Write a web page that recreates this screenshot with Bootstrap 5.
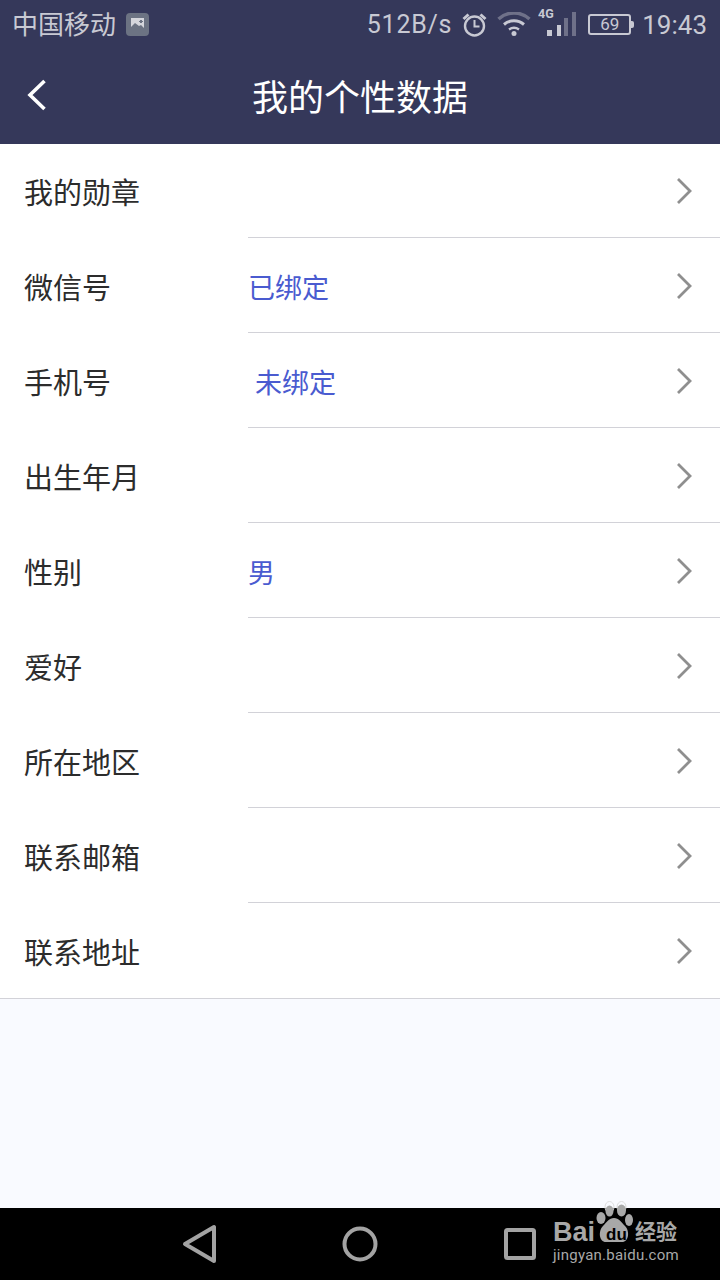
<!DOCTYPE html>
<html lang="zh-CN">
<head>
  <meta charset="UTF-8" />
  <meta name="viewport" content="width=device-width, initial-scale=1.0" />
  <title>我的个性数据</title>
  <link href="https://cdn.jsdelivr.net/npm/bootstrap@5.3.0/dist/css/bootstrap.min.css" rel="stylesheet" />
  <style>
    html, body { height: 100%; margin: 0; }
    body { width: 720px; height: 1280px; overflow: hidden; background: #f9faff; font-family: "Roboto", "Noto Sans CJK SC", sans-serif; }
    .phone { height: 1280px; }
    .status-bar { height: 48px; background: #35385a; color: #c8c9d3; font-size: 26px; padding: 0 13px 0 12px; }
    .carrier { padding-top: 2px; }
    .status-bar .net { font-size: 25px; letter-spacing: .75px; padding-top: 2px; }
    .status-bar .clock { font-size: 26px; margin-left: 11px; padding-top: 2px; }
    .notif { margin-left: 10px; }
    .alarm { margin-left: 10px; }
    .wifi { margin-left: 10px; }
    .signal { margin-left: 7px; margin-right: 12px; }
    .batt { position: relative; width: 43px; height: 21px; border: 2px solid #c8c9d3; border-radius: 3px; font-size: 17px; line-height: 17px; text-align: center; }
    .batt::after { content: ""; position: absolute; right: -5px; top: 5px; width: 3px; height: 7px; background: #c8c9d3; border-radius: 0 2px 2px 0; }
    .app-head { height: 96px; background: #35385a; color: #fff; font-size: 36px; position: relative; }
    .app-title { padding-top: 6px; }
    .back-btn { position: absolute; left: 26px; top: 30px; line-height: 0; }
    .info-list { background: #fff; border-bottom: 1px solid #d2d2d8; border-radius: 0; }
    .info-row { height: 95px; padding: 0; border: 0; background: #fff; color: #2c2c2c; }
    .info-row:last-child { height: 94px; }
    .info-name { width: 248px; padding-left: 24px; padding-top: 3px; font-size: 29px; line-height: 94px; }
    .info-main { border-bottom: 1px solid #d2d2d8; height: 94px; padding-right: 27px; }
    .info-row:last-child .info-main { border-bottom: 0; }
    .info-val { color: #4a5bd0; font-size: 27px; padding-top: 8px; }
    .val-shift { padding-left: 7px; }
    .fill-area { background: #f9faff; }
    .nav-keys { height: 72px; background: #000; position: relative; }
    .key-back { position: absolute; left: 182px; top: 16px; }
    .key-home { position: absolute; left: 342px; top: 18px; }
    .key-recent { position: absolute; left: 503px; top: 19px; }
    .wm { position: absolute; left: 553px; top: 6px; color: #a8a8a8; width: 150px; height: 60px; }
    .wm-bai { position: absolute; left: 0; top: -2px; font: 700 27px/40px "Liberation Sans", sans-serif; }
    .wm-paw { position: absolute; left: 42px; top: -13px; }
    .wm-du { position: absolute; left: 53px; top: 13px; color: #000; font: 700 17px/16px "Liberation Sans", sans-serif; }
    .wm-jy { position: absolute; left: 82px; top: 4px; font-size: 21px; line-height: 28px; font-weight: 700; white-space: nowrap; }
    .wm-url { position: absolute; left: 0; top: 31px; font: 400 15px/20px "Roboto", sans-serif; letter-spacing: .24px; white-space: nowrap; }
  </style>
</head>
<body>
  <div class="phone d-flex flex-column">
    <div class="status-bar d-flex align-items-center">
      <span class="carrier">中国移动</span>
      <svg class="notif" width="23" height="23" viewBox="0 0 23 23"><rect width="23" height="23" rx="4" fill="#6c7383"/><rect x="5" y="5" width="13" height="13" fill="#d5d6dc"/><path d="M5 14l4-4 4 3 2-1 3 3v3H5z" fill="#6c7383"/><path d="M14 7h2v1h1v1h-1v1h-2V9h-1V8h1z" fill="#6c7383"/></svg>
      <span class="net ms-auto">512B/s</span>
      <svg class="alarm" width="25" height="25" viewBox="0 0 25 25" fill="none" stroke="#c8c9d3" stroke-width="2.400"><circle cx="12.500" cy="14" r="9.500"/><path d="M12.500 8v6.500h5" stroke-width="2"/><path d="M1.500 7l5-4.500M23.500 7l-5-4.500" stroke-width="3"/></svg>
      <svg class="wifi" width="34" height="24" viewBox="0 0 34 24" fill="none"><path d="M1.500 7c9-8 22-8 31 0" stroke="#6f7189" stroke-width="3.500"/><path d="M7 12.500c6-5 14-5 20 0" stroke="#c8c9d3" stroke-width="3"/><path d="M12 17.500c3-2 7-2 10 0" stroke="#c8c9d3" stroke-width="2.500"/><circle cx="17" cy="21.500" r="2.500" fill="#c8c9d3"/></svg>
      <svg class="signal" width="38" height="40" viewBox="0 0 38 40"><text x="0" y="14" font-size="12.500" font-weight="700" font-family="Roboto, sans-serif" fill="#c8c9d3">4G</text><rect x="9" y="26" width="5" height="6" fill="#c8c9d3"/><rect x="19" y="21" width="4" height="11" fill="#c8c9d3"/><rect x="26" y="14" width="4" height="18" fill="#6f7189"/><rect x="34" y="8" width="4" height="24" fill="#6f7189"/></svg>
      <div class="batt">69</div>
      <span class="clock">19:43</span>
    </div>

    <div class="app-head d-flex align-items-center justify-content-center">
      <span class="back-btn"><svg width="22" height="34" viewBox="0 0 22 34" fill="none" stroke="#fff" stroke-width="3.600"><path d="M18.500 3L4 17l14.500 14"/></svg></span>
      <span class="app-title">我的个性数据</span>
    </div>

    <div class="list-group info-list" id="rows"></div>
    <div class="fill-area flex-grow-1"></div>

    <div class="nav-keys">
      <svg class="key-back" width="36" height="40" viewBox="0 0 36 40" fill="none" stroke="#a3a3a3" stroke-width="4" stroke-linejoin="round"><path d="M32 3v34L3 20z"/></svg>
      <svg class="key-home" width="36" height="36" viewBox="0 0 36 36" fill="none" stroke="#a3a3a3" stroke-width="4"><circle cx="18" cy="18" r="15.500"/></svg>
      <svg class="key-recent" width="34" height="34" viewBox="0 0 34 34" fill="none" stroke="#a3a3a3" stroke-width="4" stroke-linejoin="round"><rect x="3" y="3" width="28" height="28" rx="1.500"/></svg>
      <div class="wm">
        <span class="wm-bai">Bai</span>
        <svg class="wm-paw" width="38" height="42" viewBox="0 0 38 42">
          <ellipse cx="14.500" cy="6" rx="4.500" ry="5.500" fill="none" stroke="#dcdcdc"/>
          <ellipse cx="26.500" cy="6" rx="4.500" ry="5.500" fill="none" stroke="#dcdcdc"/>
          <ellipse cx="6" cy="17" rx="4.500" ry="6" fill="#a8a8a8"/>
          <ellipse cx="14.500" cy="10" rx="4" ry="5.500" fill="#a8a8a8"/>
          <ellipse cx="26.500" cy="9.500" rx="4.500" ry="6" fill="#a8a8a8"/>
          <ellipse cx="34" cy="19" rx="4" ry="6" fill="#a8a8a8"/>
          <path d="M19 17c5 0 7 4 11 8 5 5 4 16-3 16H11C4 41 3 30 8 25c4-4 6-8 11-8z" fill="#a8a8a8"/>
        </svg>
        <span class="wm-du">du</span>
        <span class="wm-jy">经验</span>
        <span class="wm-url">jingyan.baidu.com</span>
      </div>
    </div>
  </div>

  <script src="https://cdn.jsdelivr.net/npm/bootstrap@5.3.0/dist/js/bootstrap.bundle.min.js"></script>
  <script>
    const rows = [
      ["我的勋章", ""], ["微信号", "已绑定"], ["手机号", "未绑定", "val-shift"],
      ["出生年月", ""], ["性别", "男"], ["爱好", ""],
      ["所在地区", ""], ["联系邮箱", ""], ["联系地址", ""]
    ];
    const chevron = '<svg width="17" height="28" viewBox="0 0 17 28" fill="none" stroke="#8f8f8f" stroke-width="2.800"><path d="M2 2l12 12L2 26"/></svg>';
    document.getElementById("rows").innerHTML = rows.map(r =>
      `<div class="list-group-item info-row d-flex">
        <div class="info-name">${r[0]}</div>
        <div class="info-main flex-grow-1 d-flex align-items-center justify-content-between">
          <span class="info-val ${r[2] || ""}">${r[1]}</span>${chevron}
        </div>
      </div>`).join("");
  </script>
</body>
</html>
